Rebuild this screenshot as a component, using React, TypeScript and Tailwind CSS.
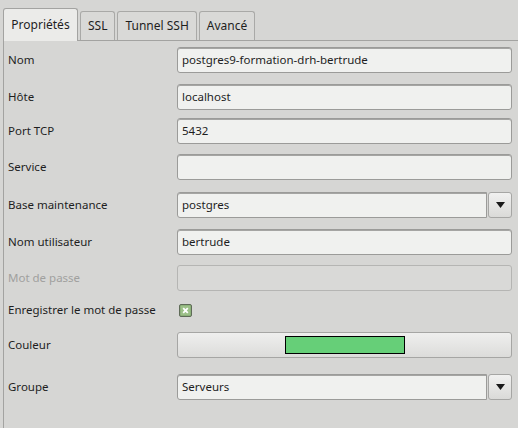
import { ReactNode } from 'react'

type Ligne = {
  label: string
  gap: string
  disabled?: boolean
  champ: ReactNode
}

function Saisie({ valeur, disabled }: { valeur?: string; disabled?: boolean }) {
  return (
    <div
      className={
        disabled
          ? 'h-full w-full rounded-[3px] border border-[#b5b5b3] bg-[#d9d9d7]'
          : 'h-full w-full rounded-[3px] border border-[#9b9b99] bg-[#f0f1ef] px-[4px] flex items-center text-[#1e1e1e] shadow-[inset_0_1px_0_#a5a5a3]'
      }
    >
      {valeur}
    </div>
  )
}

function Fleche() {
  return (
    <svg width="9" height="6" viewBox="0 0 9 6" aria-hidden="true">
      <path d="M0 0h9L4.5 6z" fill="#1a1a1a" />
    </svg>
  )
}

function Combo({ valeur }: { valeur: string }) {
  return (
    <div className="h-full w-full flex">
      <div className="flex-1 h-full border border-[#9b9b99] bg-[#f0f1ef] px-[4px] flex items-center text-[#1e1e1e] rounded-l-[3px] shadow-[inset_0_1px_0_#a5a5a3]">
        {valeur}
      </div>
      <div className="w-[24px] h-full ml-[1px] rounded-[3px] border border-[#a6a6a4] bg-gradient-to-b from-[#f1f1f0] to-[#dadad8] flex items-center justify-center">
        <Fleche />
      </div>
    </div>
  )
}

function CaseCochee() {
  return (
    <svg width="13" height="13" viewBox="0 0 13 13" aria-hidden="true">
      <rect x="0.5" y="0.5" width="12" height="12" rx="1.5" fill="#8db27a" stroke="#5f6b58" />
      <rect x="2" y="2" width="9" height="9" fill="#9cc088" />
      <path d="M4.2 4.2l4.6 4.6M8.8 4.2l-4.6 4.6" stroke="#ffffff" strokeWidth="1.8" />
    </svg>
  )
}

const lignes: Ligne[] = [
  { label: 'Nom', gap: 'mt-[6px]', champ: <Saisie valeur="postgres9-formation-drh-bertrude" /> },
  { label: 'Hôte', gap: 'mt-[11px]', champ: <Saisie valeur="localhost" /> },
  { label: 'Port TCP', gap: 'mt-[8px]', champ: <Saisie valeur="5432" /> },
  { label: 'Service', gap: 'mt-[10px]', champ: <Saisie /> },
  { label: 'Base maintenance', gap: 'mt-[12px]', champ: <Combo valeur="postgres" /> },
  { label: 'Nom utilisateur', gap: 'mt-[11px]', champ: <Saisie valeur="bertrude" /> },
  { label: 'Mot de passe', gap: 'mt-[10px]', disabled: true, champ: <Saisie disabled /> },
  {
    label: 'Enregistrer le mot de passe',
    gap: 'mt-[6px]',
    champ: (
      <div className="h-full flex items-center pl-[2px]">
        <CaseCochee />
      </div>
    ),
  },
  {
    label: 'Couleur',
    gap: 'mt-[9px]',
    champ: (
      <div className="h-full w-full rounded-[3px] border border-[#a6a6a4] bg-gradient-to-b from-[#efefee] to-[#dcdcda] flex items-center justify-center">
        <div className="w-[120px] h-[18px] bg-[#66cf78] border border-black" />
      </div>
    ),
  },
  { label: 'Groupe', gap: 'mt-[16px]', champ: <Combo valeur="Serveurs" /> },
]

const onglets = ['SSL', 'Tunnel SSH', 'Avancé']

export default function App() {
  return (
    <div
      className="w-[518px] h-[428px] bg-[#d6d6d4] text-[#1e1e1e] text-[11.5px] overflow-hidden"
      style={{ fontFamily: '"Noto Sans", "DejaVu Sans", sans-serif' }}
    >
      {/* Onglets */}
      <div className="h-[41px] pl-[3px] flex items-end gap-[2px]">
        <div className="relative z-10 h-[33px] w-[75px] rounded-t-[3px] border border-b-0 border-[#a3a3a1] bg-[#ebebe9] flex items-center justify-center pb-[1px] text-[12px]">
          Propriétés
        </div>
        {onglets.map((o) => (
          <div
            key={o}
            className="h-[29px] mb-[1px] px-[7px] rounded-t-[3px] border border-b-0 border-[#a9a9a7] bg-[#d9d9d7] flex items-center justify-center text-[12px]"
          >
            {o}
          </div>
        ))}
      </div>

      {/* Panneau */}
      <div className="-mt-[1px] ml-[3px] h-[400px] border-t border-l border-[#a3a3a1] bg-[#d6d6d4]">
        {lignes.map((l) => (
          <div key={l.label} className={`${l.gap} h-[26px] flex items-center`}>
            <div
              className={
                l.disabled
                  ? 'w-[173px] pl-[4px] text-[#a0a09e]'
                  : 'w-[173px] pl-[4px]'
              }
            >
              {l.label}
            </div>
            <div className="w-[335px] h-full">{l.champ}</div>
          </div>
        ))}
      </div>
    </div>
  )
}
